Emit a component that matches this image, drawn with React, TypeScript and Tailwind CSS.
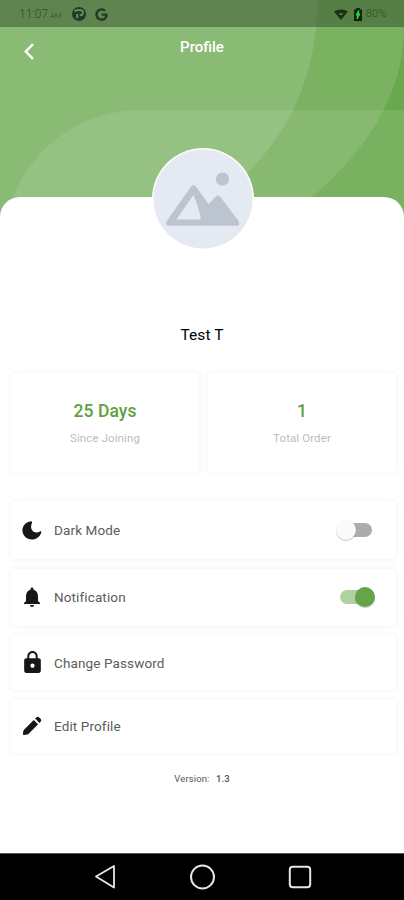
import React, { useState } from 'react';
import { FaGoogle } from 'react-icons/fa';
import { MdLock, MdNotifications } from 'react-icons/md';

interface ToggleProps {
    checked: boolean;
    onChange: () => void;
}

const Toggle: React.FC<ToggleProps> = ({ checked, onChange }) => (
    <button
        role="switch"
        aria-checked={checked}
        onClick={onChange}
        className={`flex h-5 items-center ${checked ? 'mr-[21px]' : 'mr-6'}`}
    >
        {checked ? (
            <>
                <span className="h-3.5 w-[26px] rounded-full bg-[#b0d2a2]"></span>
                <span className="-ml-[11px] h-5 w-5 rounded-full bg-[#64a54a] shadow-[0_1px_1px_rgba(0,0,0,0.22)]"></span>
            </>
        ) : (
            <>
                <span className="z-10 h-5 w-5 rounded-full bg-[#fafafa] shadow-[0_1px_1px_rgba(0,0,0,0.22)]"></span>
                <span className="-ml-[10px] h-3.5 w-[26px] rounded-full bg-[#acacac]"></span>
            </>
        )}
    </button>
);

const StatusBar: React.FC = () => (
    <div className="flex h-[27px] items-center bg-[#1e3218]/40 pt-px pl-[19px] pr-[17px] text-[#293e22]/85">
        <span className="w-[44px] whitespace-nowrap text-[12px] font-light leading-none">
            11:07<span className="ml-0.5 text-[7.5px]">AM</span>
        </span>
        <svg className="ml-[9px]" width="14" height="14" viewBox="0 0 14 14">
            <circle cx="7" cy="7" r="7" fill="#243a24" />
            <path d="M2.6 4.6A3 3 0 0 1 5 3.2h3.4a2.5 2.5 0 0 1 0 5H7.8M5.2 11.2V7" fill="none" stroke="#71915f" strokeWidth="1.8" />
        </svg>
        <FaGoogle className="ml-[9px] h-[13px] w-[13px] text-[#243a24]" />
        <svg className="ml-auto" width="14" height="11" viewBox="0 0 14 11">
            <path d="M0 2.5C4-.3 10-.3 14 2.5L7 11z" fill="#1c3018" />
            <path d="M5 4.2h4L8.4 6H5.6z" fill="#587a49" />
        </svg>
        <svg className="ml-[6px]" width="8" height="13" viewBox="0 0 8 13">
            <path d="M2.2 0h3.6v1.5H8V13H0V1.5h2.2z" fill="#122011" />
            <path d="M4.8 2.5 2 7h1.5L3 11l3-5H4.5z" fill="#20df35" stroke="#20df35" />
        </svg>
        <span className="ml-[4px] text-[11.5px] font-light leading-none">80%</span>
    </div>
);

const AvatarPlaceholder: React.FC = () => (
    <svg width="102" height="102" viewBox="0 0 102 102" className="relative -top-[49px]">
        <circle cx="51" cy="51" r="51" fill="#fff" />
        <circle cx="51" cy="51" r="49.5" fill="#e5e9f2" />
        <circle cx="70.5" cy="31" r="6.6" fill="#bcc4cf" />
        <path
            fillRule="evenodd"
            fill="#bcc4cf"
            d="M38.4 39.2Q41.4 35 44.4 39.2L56.7 56.3L63.2 48.9Q65.8 45.9 68.4 48.9L86.6 73Q88.7 77.8 84.7 77.8H16.7Q12.4 77.3 14.8 73ZM41.4 47L24.4 71.4H48.9Q47.2 60 41.4 47Z"
        />
    </svg>
);

const MoonIcon: React.FC = () => (
    <svg width="20" height="19" viewBox="0 0 20 19" fill="currentColor">
        <path d="M8.3.4C3.8.8.4 4.8.4 9.3c0 5.1 4.2 9.3 9.4 9.3 4.5 0 8.5-3 9.5-7.4.2-.8-.6-1.3-1.3-.8-1.2.9-2.4 1.2-3.6 1.1-3-.2-5.3-2.5-5.3-5.5 0-1.6.3-2.8.9-4C10.500 1 9.600.2 8.300.4Z" />
    </svg>
);

const PencilIcon: React.FC = () => (
    <svg width="20" height="20" viewBox="0 0 20 20" fill="currentColor">
        <path d="M11.7 3.9 16.100 8.300 6.400 18Q5.800 18.500 5 18.600L2 19Q.8 19 .9 17.900L1.300 15.200Q1.400 14.300 2 13.700ZM13.100 2.600 14.500 1.200Q15.800.2 17 1.200L18.800 3Q19.800 4.200 18.800 5.500L17.400 6.900Z" />
    </svg>
);

const NavBar: React.FC = () => (
    <nav className="flex h-[47px] flex-none items-center justify-between border-t border-[#555] bg-black pl-[94px] pr-[92px] text-[#e6e6e6]">
        <svg width="22" height="26" viewBox="0 0 22 26" fill="none" stroke="currentColor" strokeWidth="1.8" strokeLinejoin="round">
            <path d="M20 2v21.5L2 12.5z" />
        </svg>
        <svg width="26" height="26" viewBox="0 0 26 26" fill="none" stroke="currentColor" strokeWidth="2">
            <circle cx="13.5" cy="13" r="11.5" />
        </svg>
        <svg width="24" height="24" viewBox="0 0 24 24" fill="none" stroke="currentColor" strokeWidth="2">
            <rect x="1.8" y="1.8" width="20.4" height="20.4" rx="3" />
        </svg>
    </nav>
);

const App: React.FC = () => {
    const [darkMode, setDarkMode] = useState(false);
    const [notification, setNotification] = useState(true);

    const stats = [
        { value: '25 Days', label: 'Since Joining' },
        { value: '1', label: 'Total Order' }
    ];

    const rows = [
        {
            label: 'Dark Mode',
            icon: <MoonIcon />,
            height: 'h-[58px]',
            action: <Toggle checked={darkMode} onChange={() => setDarkMode(!darkMode)} />
        },
        {
            label: 'Notification',
            icon: <MdNotifications className="h-6 w-6" />,
            height: 'h-[57px]',
            action: <Toggle checked={notification} onChange={() => setNotification(!notification)} />
        },
        { label: 'Change Password', icon: <MdLock className="h-[25px] w-[25px]" />, height: 'h-[55px]', action: null },
        { label: 'Edit Profile', icon: <PencilIcon />, height: 'h-[53px]', action: null }
    ];

    return (
        <div className="relative flex h-[900px] w-[404px] flex-col overflow-hidden bg-white font-['Roboto',sans-serif]">
            <svg className="absolute left-0 top-0" width="404" height="225" viewBox="0 0 404 225">
                <rect width="404" height="225" fill="#69a94d" />
                <path d="M0 0H404V27Q404 118 312 197L280 225H0Z" fill="#fff" fillOpacity="0.115" />
                <path d="M0 0H317C318 74 289 130 253 167Q228 195 175 225H0Z" fill="#fff" fillOpacity="0.12" />
                <path d="M404 110H142C84 110 34 144 13 197L3 225H404Z" fill="#fff" fillOpacity="0.1" />
            </svg>

            <header className="relative h-[197px] flex-none">
                <StatusBar />
                <div className="grid grid-cols-3 px-[22px] pt-[9px] text-white">
                    <button className="mt-[7px] h-[17px] w-[14px]" aria-label="Back">
                        <svg width="14" height="17" viewBox="0 0 14 17" fill="none" stroke="currentColor" strokeWidth="2.4">
                            <path d="M11 1.2 3.8 8.5 11 15.8" />
                        </svg>
                    </button>
                    <h1 className="text-center text-[15px] font-medium leading-[22px]">Profile</h1>
                </div>
            </header>

            <main className="relative flex flex-1 flex-col rounded-t-[20px] bg-white">
                <div className="flex h-[127px] flex-none justify-center pl-px">
                    <AvatarPlaceholder />
                </div>
                <h2 className="text-center text-[15.5px] font-normal leading-[22px] tracking-[0.1px] text-black">Test T</h2>

                <section className="mt-[27px] flex gap-[9px] pl-[11px] pr-2">
                    {stats.map((stat) => (
                        <div
                            key={stat.label}
                            className="flex h-[99px] flex-1 flex-col items-center rounded-[4px] bg-white pt-[27px] shadow-[0_0_4px_2px_rgba(0,0,0,0.03)]"
                        >
                            <span className="text-[17.5px] font-medium leading-[22px] tracking-[0.1px] text-[#5da141]">{stat.value}</span>
                            <span className="mt-2 text-[11.5px] leading-4 tracking-[0.1px] text-[#bcbcc0]">{stat.label}</span>
                        </div>
                    ))}
                </section>

                <section className="mt-[29px] flex flex-col gap-[9.5px] pl-[11px] pr-2">
                    {rows.map((row) => (
                        <div
                            key={row.label}
                            className={`flex items-center rounded-[4px] bg-white shadow-[0_0_4px_2px_rgba(0,0,0,0.03)] ${row.height}`}
                        >
                            <span className="ml-2 flex w-[26px] justify-center text-[#171717]">{row.icon}</span>
                            <span className="ml-[9px] flex-1 pt-px text-[13.5px] tracking-[0.12px] text-[#5c5c5c]">{row.label}</span>
                            {row.action}
                        </div>
                    ))}
                </section>

                <p className="mt-[18px] text-center text-[9.5px] leading-4 tracking-[0.1px] text-[#555]">
                    Version: <span className="ml-1 font-medium">1.3</span>
                </p>
            </main>

            <NavBar />
        </div>
    );
};

export default App;
